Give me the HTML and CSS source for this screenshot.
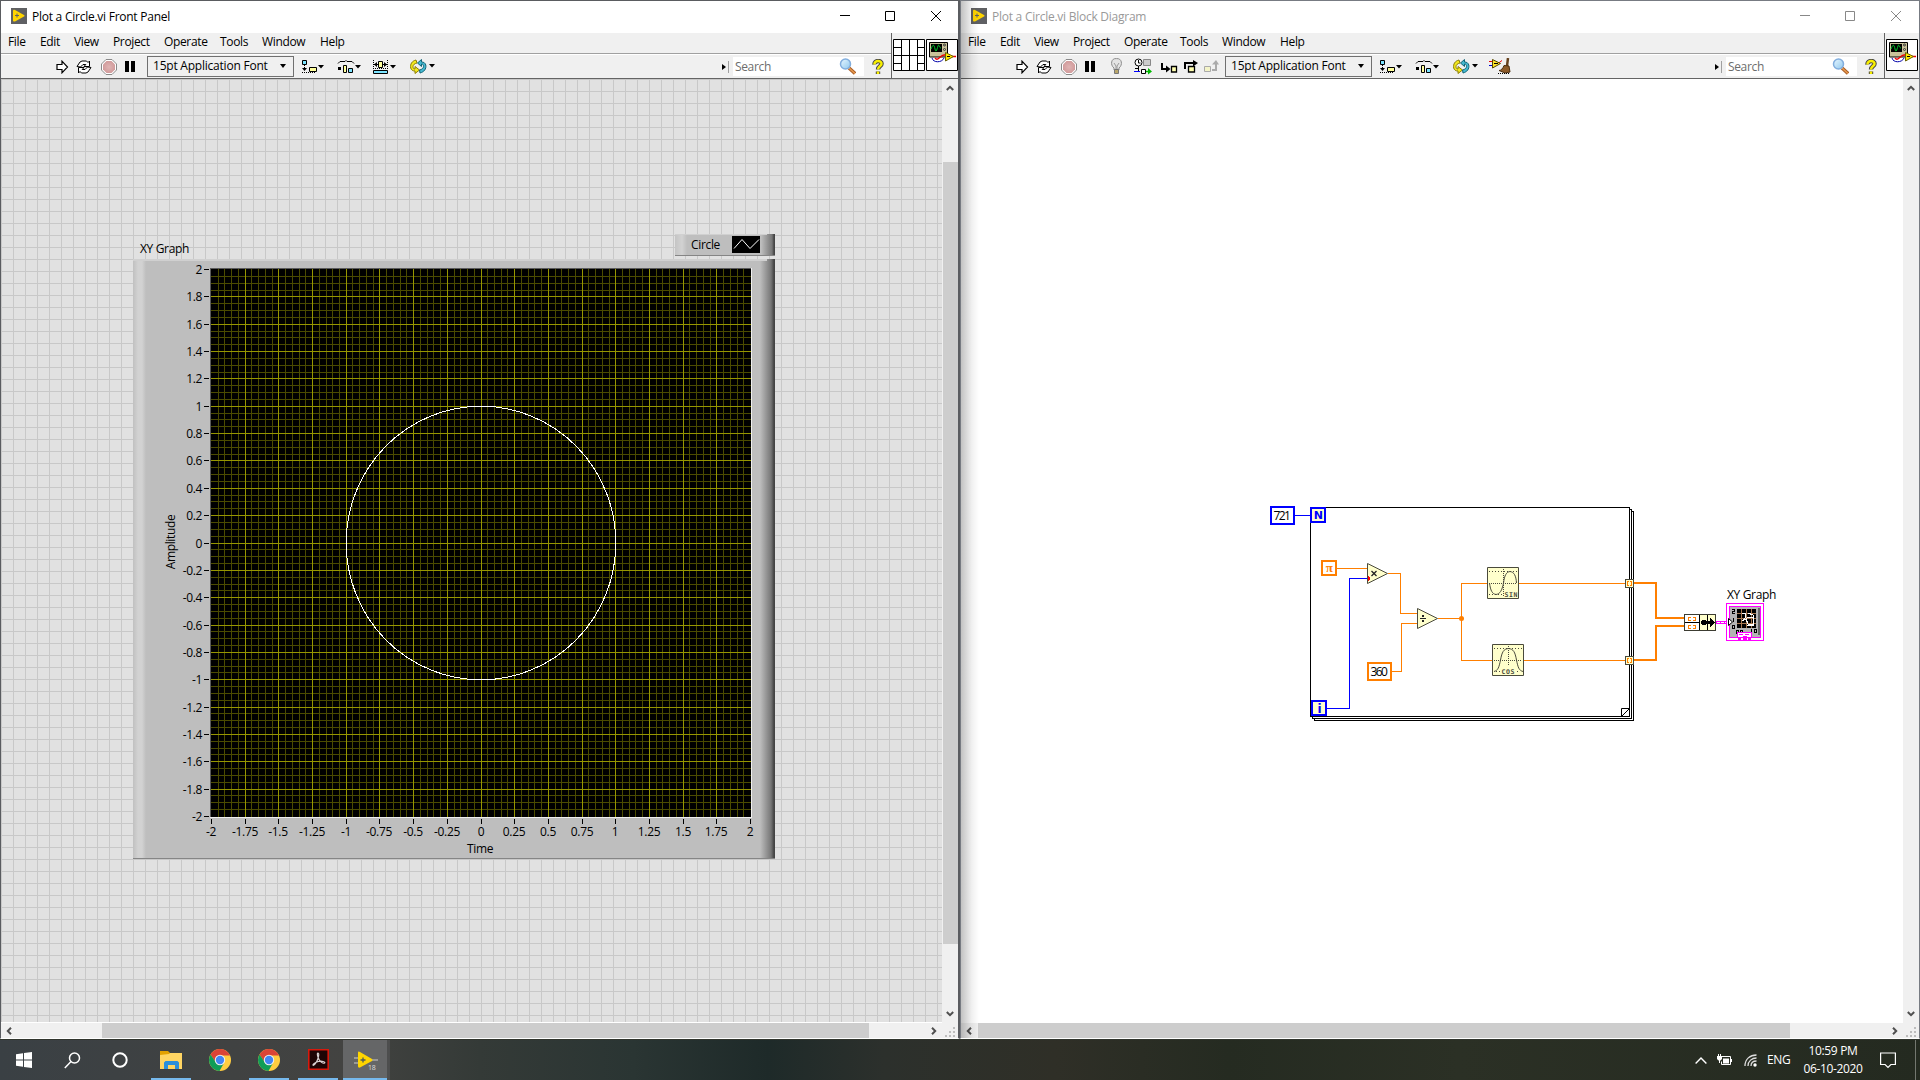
FILE: index.html
```html
<!DOCTYPE html>
<html lang="en">
<head>
<meta charset="utf-8">
<title>Plot a Circle.vi</title>
<link rel="stylesheet" href="styles.css">
</head>
<body>
<svg class="defs" aria-hidden="true">
  <defs>
    <radialGradient id="abortFill"><stop offset="0" stop-color="#e0b4b4"/><stop offset="1" stop-color="#d29c9c"/></radialGradient>
    <linearGradient id="lens" x1="0" y1="0" x2="1" y2="1"><stop offset="0" stop-color="#e8f7ff"/><stop offset="1" stop-color="#8fc8ee"/></linearGradient>
    <symbol id="app" viewBox="0 0 16 16"><path fill="#5f6063" d="M0 0h16v16H0z"/><path fill="#ffd500" d="M2 2.500c0-1 1-1 2-.6l9 5c.8.5.8 1 0 1.500l-9 5c-1 .4-2 .2-2-.8z"/><path stroke="#5f6063" d="M4 7.500h4M6 5.500v4"/></symbol>
    <symbol id="run" viewBox="0 0 13 14"><path fill="#fff" stroke="#000" stroke-width="1.200" d="M1 4.500h5V1.200L11.500 7 6 12.800V9.500H1z"/></symbol>
    <symbol id="loop" viewBox="0 0 16 14"><g fill="#fff" stroke="#000"><path d="M1 6.500L4 2l2-1h4.500l1.500 1.500L13.500 1v5.500H8L9.800 4.500H7L4.500 7z"/><path d="M15 7.500L12 12l-2 1H5.500L4 11.500 2.500 13V7.500H8L6.200 9.500H9L11.500 7z"/></g></symbol>
    <symbol id="abort" viewBox="0 0 16 16"><path fill="#fff" stroke="#8a8a8a" d="M5 .5h6L15.500 5v6L11 15.500H5L.5 11V5z"/><path fill="url(#abortFill)" d="M5.500 2h5L14 5.500v5L10.500 14h-5L2 10.500v-5z"/></symbol>
    <symbol id="pause" viewBox="0 0 10 11"><path d="M0 0h4v11H0zM6 0h4v11H6z"/></symbol>
    <symbol id="align" viewBox="0 0 24 14"><path fill="#7be4ff" stroke="#000" d="M1.500.5h4v4h-4z"/><path fill="#ffff9c" stroke="#000" d="M8.500 7.500h7v4h-7z"/><path stroke="#000" d="M3.500 5v5M1 12.500h14" stroke-dasharray="1 1"/><path d="M1 8h5L3.500 11zM17 5h6l-3 3.500z"/></symbol>
    <symbol id="dist" viewBox="0 0 24 14"><path fill="none" stroke="#000" d="M1 3.500l2-2h5l1-1 1 1h5l2 2"/><path d="M1 7h3v3H1zM18 5h6l-3 3.500z"/><path fill="#ffff9c" stroke="#000" d="M6.500 5.500h3v7h-3z"/><path fill="#7be4ff" stroke="#000" d="M11.500 8.500h4v4h-4z"/></symbol>
    <symbol id="resize" viewBox="0 0 24 14"><path stroke="#000" stroke-dasharray="1 1" d="M1.500 0v9M15.500 0v9M1 8.500h14"/><path stroke="#000" d="M2 4.500h13"/><path d="M2 4.500L5 2v5zM15 4.500L12 2v5zM18 5h6l-3 3.500z"/><path fill="#ffff9c" stroke="#000" d="M6.500 1.500h4v6h-4z"/><path fill="#7be4ff" stroke="#000" d="M1.500 10.500h14v3h-14z"/></symbol>
    <symbol id="reorder" viewBox="0 0 25 15"><path fill="#f2e81d" stroke="#8b7c05" d="M6 1C2 2 0 5 .7 9c.6 2 2 3 4.300 3v2.500L9.500 11 5 7.500V10c-1.500 0-2-1-2-2.500C3 6 4.500 4.500 7 4z"/><path fill="#45b8d0" stroke="#126577" d="M10 14c4-1 6.500-4 5.800-8-.6-2-2-3-4.300-3V.5L7.500 4l4 3.500V5c1.500 0 2 1 2 2.500 0 1.500-1.500 3-4 3.500z"/><path d="M19 5h6l-3 3.500z"/></symbol>
    <symbol id="bulb" viewBox="0 0 13 17"><path fill="#e4e4e4" stroke="#8c8c8c" d="M4 10C0 7 1-.1 6.500.6 12 0 13 7 9 10v2H4z"/><path fill="none" stroke="#999" d="M4 5l2 3v3M9 5L7 8v3"/><path fill="#b9a66a" stroke="#777" d="M4.500 11.500h4v4h-4z"/></symbol>
    <symbol id="retain" viewBox="0 0 18 17"><circle cx="4.500" cy="4.500" r="3.500" fill="#fff" stroke="#000"/><path fill="none" stroke="#000" d="M4.500 2v3h2M4.500 8v5M1 10.500h3"/><path fill="#ccc" stroke="#888" d="M9.500 1.500h7v6h-7z"/><path stroke="#00f" d="M0 13.500h6"/><path fill="#fff" stroke="#000" d="M7.500 11.500h4v4h-4z"/><path fill="#0b0" d="M12 12.800h2V10l4 3.500-4 3v-2.300h-2z"/></symbol>
    <symbol id="into" viewBox="0 0 17 12"><path fill="none" stroke="#000" stroke-width="2" d="M1 1v6h5"/><path d="M5 3.500L9.500 7 5 10.500z"/><path fill="#ffffb0" stroke="#000" stroke-width="1.300" d="M10.500 4.500h5v5.500h-5z"/></symbol>
    <symbol id="over" viewBox="0 0 15 13"><path fill="none" stroke="#000" stroke-width="2" d="M1 9V3h9"/><path d="M9 0l5 3-5 3.500z"/><path fill="#ffffb0" stroke="#000" stroke-width="1.300" d="M4.500 6.500h6v5.500h-6z"/></symbol>
    <symbol id="out" viewBox="0 0 15 13"><path fill="#f4f4c8" stroke="#aaa" d="M.5 6.500h6v5h-6z"/><path fill="none" stroke="#aaa" stroke-width="2" d="M8 10h4V4"/><path fill="#aaa" d="M8 4.500L12 0l3 4.500z"/></symbol>
    <symbol id="cleanup" viewBox="0 0 22 17"><path stroke="#00c" d="M0 7.500h4"/><path stroke="#e00" fill="none" d="M0 3.500h3M9 5.500l4-3"/><path fill="#ffe52b" stroke="#554700" d="M3.500 1.500l8 4-8 4.500z"/><path stroke="#000" d="M5 5.500h4"/><path stroke="#65401c" stroke-width="2.500" d="M19 0l-1 8"/><path fill="#8c5a28" stroke="#4a2d0e" d="M15 7.500l5 .5 1 6-5 1-6-2.500c2 0 4-2 5-5z"/><path stroke="#000" stroke-dasharray="1 1" d="M9 15.500h12"/></symbol>
    <symbol id="search" viewBox="0 0 17 17"><path stroke="#a85d27" stroke-width="3.500" d="M10 10l6 5.500"/><path stroke="#e99b4f" stroke-width="1.500" d="M10 10l6 5.500"/><circle cx="6.500" cy="6" r="5" fill="url(#lens)" stroke="#82aede" stroke-width="1.500"/></symbol>
    <symbol id="help" viewBox="0 0 12 16"><path fill="none" stroke="#444" stroke-width="4.400" d="M2.500 5.500C2 1 10 1 9.500 5c0 2-3.500 2-3.500 5.500M6 12.500v2.500"/><path fill="none" stroke="#f8ef00" stroke-width="2.500" d="M2.500 5.500C2 1 10 1 9.500 5c0 2-3.500 2-3.500 5.500M6 12.500v2.500"/></symbol>
    <symbol id="pane" viewBox="0 0 32 32"><path fill="#fff" stroke="#000" d="M.5 .5h31v31H.5zM8.500 0v32M16.500 0v32M24.500 0v32M0 16.500h32M0 8.500h8M0 24.500h8M24 8.500h8M24 24.500h8"/></symbol>
    <symbol id="vi" viewBox="0 0 32 32"><path fill="#fff" stroke="#000" d="M.5.5h31v31H.5z"/><path fill="#c8c29a" stroke="#000" d="M3.500 3.500h18v14.500h-18z"/><path d="M5 5h11v8H5z"/><path fill="none" stroke="#00cf2c" d="M5 10c2-5 3-5 4 0s2 0 3-3 2 3 3 2"/><circle cx="18.500" cy="6" r="1" fill="none" stroke="#333"/><circle cx="18.500" cy="10.500" r="1" fill="none" stroke="#333"/><path fill="none" stroke="#00a" d="M6 19c1 5 10 5 12 0"/><path fill="none" stroke="#e00" stroke-width="1.300" d="M9 19c3 4 5-3 9-3h1M26 17.500h4"/><path fill="#ffe800" stroke="#6b6100" d="M19.500 13.500l8 4-8 4.500z"/><path stroke="#000" d="M21 17.500h3"/></symbol>
    <symbol id="up" viewBox="0 0 8 6"><path fill="none" stroke="#505050" stroke-width="2" d="M.8 5L4 1.800 7.200 5"/></symbol>
    <symbol id="chrome" viewBox="0 0 22 22"><circle cx="11" cy="11" r="11" fill="#ffcd40"/><path fill="#db4437" d="M1.500 5.500A11 11 0 0 1 20.500 5.500L21 6.500H11L6.500 13z"/><path fill="#0f9d58" d="M1.500 5.500A11 11 0 0 0 10.500 22L15 14 11 15.500 7 13.500z"/><circle cx="11" cy="11" r="5.200" fill="#f1f1f1"/><circle cx="11" cy="11" r="4.200" fill="#4285f4"/></symbol>
    <symbol id="grip" viewBox="0 0 10 10"><path fill="#bdbdbd" d="M8 0h2v2H8zM4 4h2v2H4zM8 4h2v2H8zM0 8h2v2H0zM4 8h2v2H4zM8 8h2v2H8z"/></symbol>
  </defs>
</svg>

<div class="desktop">
  <main class="windows">
    <section class="window window-front">
      <header class="titlebar">
        <svg class="app-icon"><use href="#app"/></svg>
        <span class="title">Plot a Circle.vi Front Panel</span>
        <svg class="caption" viewBox="0 0 102 12"><path fill="none" stroke="#000" d="M0 5.500h10M45.500 1.500h9v9h-9zM91 1l10 10M101 1L91 11"/></svg>
      </header>
      <div class="bars">
        <div class="bars-main">
          <nav class="menu"><span class="m-file">File</span><span class="m-edit">Edit</span><span class="m-view">View</span><span class="m-project">Project</span><span class="m-operate">Operate</span><span class="m-tools">Tools</span><span class="m-window">Window</span><span>Help</span></nav>
          <div class="toolbar">
            <svg class="i-run"><use href="#run"/></svg>
            <svg class="i-loop"><use href="#loop"/></svg>
            <svg class="i-abort"><use href="#abort"/></svg>
            <svg class="i-pause"><use href="#pause"/></svg>
            <div class="font-box gap-front"><span>15pt Application Font</span><i></i></div>
            <svg class="i-drop"><use href="#align"/></svg>
            <svg class="i-drop next"><use href="#dist"/></svg>
            <svg class="i-drop third"><use href="#resize"/></svg>
            <svg class="i-reorder"><use href="#reorder"/></svg>
            <div class="search-wrap"><i class="tri"></i><i class="sep"></i><div class="search"><span>Search</span><svg class="i-search"><use href="#search"/></svg></div><svg class="i-help"><use href="#help"/></svg></div>
          </div>
        </div>
        <div class="connector"><svg><use href="#pane"/></svg><svg><use href="#vi"/></svg></div>
      </div>
      <div class="work">
        <div class="panel">
          <span class="graph-label">XY Graph</span>
          <div class="legend"><span>Circle</span><svg viewBox="0 0 28 17"><path d="M0 0h28v17H0z"/><path fill="none" stroke="#fff" d="M2 12.500l8-9 8 9 9-9"/></svg></div>
          <div class="graph"><svg id="plot" viewBox="133 259 642 600"></svg></div>
        </div>
        <div class="vscroll"><svg class="arrow"><use href="#up"/></svg><div class="thumb"></div><svg class="arrow down"><use href="#up"/></svg></div>
      </div>
      <div class="hscroll"><svg class="arrow left"><use href="#up"/></svg><div class="thumb"></div><svg class="arrow right"><use href="#up"/></svg><svg class="grip"><use href="#grip"/></svg></div>
    </section>

    <section class="window window-block">
      <header class="titlebar">
        <svg class="app-icon"><use href="#app"/></svg>
        <span class="title">Plot a Circle.vi Block Diagram</span>
        <svg class="caption" viewBox="0 0 102 12"><path fill="none" stroke="#888" d="M0 5.500h10M45.500 1.500h9v9h-9zM91 1l10 10M101 1L91 11"/></svg>
      </header>
      <div class="bars">
        <div class="bars-main">
          <nav class="menu"><span class="m-file">File</span><span class="m-edit">Edit</span><span class="m-view">View</span><span class="m-project">Project</span><span class="m-operate">Operate</span><span class="m-tools">Tools</span><span class="m-window">Window</span><span>Help</span></nav>
          <div class="toolbar">
            <svg class="i-run"><use href="#run"/></svg>
            <svg class="i-loop"><use href="#loop"/></svg>
            <svg class="i-abort"><use href="#abort"/></svg>
            <svg class="i-pause"><use href="#pause"/></svg>
            <svg class="i-bulb"><use href="#bulb"/></svg>
            <svg class="i-retain"><use href="#retain"/></svg>
            <svg class="i-into"><use href="#into"/></svg>
            <svg class="i-over"><use href="#over"/></svg>
            <svg class="i-out"><use href="#out"/></svg>
            <div class="font-box gap-block"><span>15pt Application Font</span><i></i></div>
            <svg class="i-drop"><use href="#align"/></svg>
            <svg class="i-drop next"><use href="#dist"/></svg>
            <svg class="i-reorder"><use href="#reorder"/></svg>
            <svg class="i-cleanup"><use href="#cleanup"/></svg>
            <div class="search-wrap"><i class="tri"></i><i class="sep"></i><div class="search"><span>Search</span><svg class="i-search"><use href="#search"/></svg></div><svg class="i-help"><use href="#help"/></svg></div>
          </div>
        </div>
        <div class="connector"><svg><use href="#vi"/></svg></div>
      </div>
      <div class="work">
        <svg class="diagram" viewBox="961 79 942 944" shape-rendering="crispEdges">
          <g fill="#fff" stroke="#000">
            <path d="M1314.500 511.500h319v209h-319z"/>
            <path d="M1312.500 509.500h319v209h-319z"/>
            <path d="M1310.500 507.500h319v209h-319z"/>
            <path d="M1621.500 716v-7.500h8M1621.500 716.500l8-8" shape-rendering="auto"/>
          </g>
          <g fill="none" stroke="#00f"><path d="M1295 515.500h15M1327 708.500h22.500v-130h18"/></g>
          <g fill="none" stroke="#ff7f00">
            <path d="M1337 568.500h31M1388 573.500h12.500v40h17M1392 671.500h9.500v-48h16M1438 618.500h23.500M1487 583.500h-25.500v77h31M1519 583.500h107M1524 660.500h102"/>
            <path stroke-width="2" d="M1634 583h22v35h28M1634 660h22v-34h28"/>
          </g>
          <circle cx="1461.500" cy="618.500" r="2.500" fill="#ff7f00" shape-rendering="auto"/>
          <g fill="#fff" stroke-width="2">
            <path stroke="#00f" d="M1271 507h23v17h-23z"/>
            <path stroke="#ff7f00" d="M1322 561h14v14h-14zM1368 663h23v17h-23z"/>
            <path fill="#ffffcc" stroke="#00f" d="M1311 508h14v14h-14zM1312 701h14v14h-14z"/>
          </g>
          <text x="1273.500" y="520" textLength="17">721</text>
          <text x="1370.500" y="676" textLength="17">360</text>
          <text class="t-blue" x="1318.300" y="519">N</text>
          <text class="t-index" x="1319.300" y="712.500">i</text>
          <text class="t-pi" x="1329.200" y="572">π</text>
          <g fill="#ffffcc" stroke="#4a4a3c" shape-rendering="auto">
            <path d="M1367.500 563.500v20l20-10z"/><path d="M1417.500 608.500v20l20-10z"/>
            <path d="M1487.500 567.500h31v31h-31zM1492.500 644.500h31v31h-31z"/>
          </g>
          <path stroke="#222" stroke-width="1.300" shape-rendering="auto" d="M1371.500 571l5 5M1376.500 571l-5 5"/>
          <path fill="#222" d="M1420 618h6v1h-6zM1422 615h2v2h-2zM1422 620h2v2h-2z"/>
          <path fill="#f00" d="M1368 576h1l1 2v1l-1 2h-1z"/>
          <g fill="none" stroke="#4a4a3c">
            <path stroke-dasharray="1 1" d="M1489 583.500h28M1503.500 569v28M1494 660.500h28M1508.500 646v20"/>
            <path stroke-dasharray="1 2" d="M1489 571.500h28M1489 594.500h14M1494 648.500h28M1496 671.500h24"/>
            <path shape-rendering="auto" d="M1489.500 583c1 8 3 11 6.500 11.500 4-.5 6-4 7.500-11.500 1-8 3-11 6.500-11.500 4 .5 6 4 6.500 11.500M1494 671.500c4-1 5-4 6.500-11.500 1.500-8 3-11 8-11.500 5 .5 6.500 3.500 8 11.500 1.500 7.500 2.500 10.500 6.500 11.500"/>
          </g>
          <path fill="#ffffcc" d="M1504 591h14v7h-14zM1501 668h14v6h-14z"/>
          <text class="t-small" x="1504.500" y="597" textLength="13">SIN</text>
          <text class="t-small" x="1501.500" y="674" textLength="13">COS</text>
          <path fill="#ffffcc" stroke="#4a4a3c" d="M1625.500 579.500h8v8h-8zM1625.500 656.500h8v8h-8z"/>
          <path fill="none" stroke="#ff7f00" d="M1629 581.500h-1.500v4h1.500M1630 581.500h1.500v4h-1.500M1629 658.500h-1.500v4h1.500M1630 658.500h1.500v4h-1.500"/>
          <path fill="#ffffcc" stroke="#3c3c32" d="M1684.500 614.500h31v16h-31z"/>
          <path fill="#fff" d="M1685 615h14v15h-14z"/>
          <path stroke="#000" d="M1685 622.500h14M1699.500 615v15M1707.500 615v15"/>
          <path d="M1702 620h4v1h4v-3l5 4.500-5 4.500v-3h-4v1h-4l-1-1v-3z"/>
          <path fill="none" stroke="#ff7f00" d="M1691 617.500h-2.500v3h2.500M1693 617.500h2.500v3h-2.500M1691 625.500h-2.500v3h2.500M1693 625.500h2.500v3h-2.500"/>
          <path fill="#f0f" d="M1716 621h10v3h-10z"/><path stroke="#fff" stroke-dasharray="3 1" d="M1717 622.500h9"/>
          <text x="1727" y="599" textLength="49" lengthAdjust="spacingAndGlyphs">XY Graph</text>
          <path fill="#fff" stroke="#f0f" d="M1726.500 603.500h37v37h-37z"/>
          <path fill="#b4b4b4" stroke="#f0f" d="M1729.500 606.500h31v31h-31z"/>
          <path fill="#666" d="M1758 608h2v27h-2z"/>
          <path d="M1737 609h19v19h-19z"/>
          <path fill="none" stroke="#a87850" d="M1741.500 609v19M1746.500 609v19M1751.500 609v19M1737 613.500h19M1737 618.500h19M1737 623.500h19"/>
          <path fill="none" stroke="#fff" d="M1742 613h3v5l-3 3 4-2 2 5h5v-7h-5l-3 3M1748 613l5 2v10h-6"/>
          <path fill="none" stroke="#000" d="M1732 609.500h2.500v2h-2v2h2.500M1733.500 618v4M1732.500 625.500h2v3h-2zM1736.500 630.500h2v3h-2zM1740.500 630.500h2v3h-2zM1751.500 629v5M1754.500 629.500h2v3h-2z"/>
          <path fill="#fff" stroke="#000" shape-rendering="auto" d="M1728.500 618.500v7l4-3.500z"/>
          <path fill="#fff" stroke="#f0f" d="M1737.500 632.500h14v5h-14z"/><path fill="#f0f" d="M1739 634h4v1h-4zM1745 634h4v1h-4zM1738 638h3v3h-3zM1743 636h4v4h-4zM1748 638h3v3h-3z"/>
        </svg>
        <div class="vscroll"><svg class="arrow"><use href="#up"/></svg><svg class="arrow down"><use href="#up"/></svg></div>
      </div>
      <div class="hscroll"><svg class="arrow left"><use href="#up"/></svg><div class="thumb"></div><svg class="arrow right"><use href="#up"/></svg><svg class="grip"><use href="#grip"/></svg></div>
    </section>
  </main>

  <footer class="taskbar">
    <div class="task"><svg width="16" height="16" viewBox="0 0 16 16"><path fill="#fff" d="M0 2.300l7-1v6.200H0zM8 1.100L16 0v7.500H8zM0 8.500h7v6.200l-7-1zM8 8.500h8V16l-8-1.100z"/></svg></div>
    <div class="task"><svg width="17" height="17" viewBox="0 0 17 17"><g fill="none" stroke="#fff" stroke-width="1.500"><circle cx="10.500" cy="6" r="5"/><path d="M7 9.500L.8 16"/></g></svg></div>
    <div class="task"><svg width="16" height="16" viewBox="0 0 16 16"><circle cx="8" cy="8" r="6.700" fill="none" stroke="#fff" stroke-width="2"/></svg></div>
    <div class="task gap open"><svg width="22" height="19" viewBox="0 0 22 19"><path fill="#e3a100" d="M0 0h8l2 2v3H0z"/><path fill="#ffd563" d="M0 4l9-1 1-1h12v16H0z"/><path fill="#2b8fdb" d="M4 18v-6.500L5.500 10h12l1.500 1.500V18h-4v-4H8v4z"/></svg></div>
    <div class="task gap"><svg width="22" height="22"><use href="#chrome"/></svg></div>
    <div class="task gap open"><svg width="22" height="22"><use href="#chrome"/></svg></div>
    <div class="task gap open"><svg class="raise" width="21" height="21" viewBox="0 0 21 21"><path fill="#1e0505" stroke="#d8190c" stroke-width="1.600" d="M.8.8h19.400v19.400H.8z"/><path fill="none" stroke="#d8d0d0" stroke-width="1.200" d="M10 4c-1.500 0 0 4.500 1 6.500s4 4.500 5.500 3.500-3-2.500-6-1.500-6 2-5.500 3.500S9 13 10 9.500 11 4 10 4z"/></svg></div>
    <div class="task active"><svg width="26" height="21" viewBox="0 0 26 21"><path stroke="#aaa" stroke-width="1.500" d="M2 8h6M2 13h6M19 10h7"/><path fill="#ffd500" d="M6 2.500Q6 1 8 2l12 7q1 1 0 2L8 17.500Q6 18 6 16.500z"/><path stroke="#4d5a5a" stroke-width="1.300" d="M8.500 10h5M11 7.500v5"/><text class="badge" x="16" y="20">18</text></svg></div>
    <div class="tray">
      <svg class="tray-up" viewBox="0 0 12 7"><path fill="none" stroke="#fff" stroke-width="1.400" d="M.6 6.400L6 1l5.400 5.400"/></svg>
      <svg class="tray-battery" viewBox="0 0 16 12"><path fill="none" stroke="#fff" d="M5 2.500h8.500v8H4.500v-3M14.500 5v3"/><path fill="#fff" d="M6 4.500h6v5H6zM0 2h5v3L3.500 6.500h-2L0 5zM1 0h1v2H1zM3 0h1v2H3zM2 6h1v3H2z"/></svg>
      <svg class="tray-wifi" viewBox="0 0 14 13"><g fill="none" stroke="#ddd" stroke-width="1.300"><path d="M1 12C1 5 6 1 12.500 1M4 12c0-5 4-8 8.500-8M7 12c0-3 2-5 5.500-5"/></g><circle cx="11" cy="11" r="1.700" fill="#fff"/></svg>
      <span class="lang">ENG</span>
      <div class="clock"><span>10:59 PM</span><span>06-10-2020</span></div>
      <svg class="tray-note" viewBox="0 0 16 17"><path fill="none" stroke="#fff" stroke-width="1.200" d="M.6 1h14.800v11.500h-4.500L8 15.400l-2.900-2.900H.6z"/></svg>
      <i class="peek"></i>
    </div>
  </footer>
</div>
<script src="plot.js"></script>
</body>
</html>
```
FILE: plot.js
```javascript
const plot = document.getElementById("plot");
const NS = "http://www.w3.org/2000/svg";
const left = 211, top_ = 269, stepX = 33.69, stepY = 27.35;
const px = (i) => Math.round(left + i * stepX);
const py = (i) => Math.round(top_ + i * stepY);

function add(tag, attrs, text) {
  const el = document.createElementNS(NS, tag);
  for (const key in attrs) el.setAttribute(key, attrs[key]);
  if (text) el.textContent = text;
  plot.appendChild(el);
}

add("rect", { x: 210, y: 268, width: 542, height: 550, fill: "#f0f0f0" });
add("rect", { x: 210, y: 268, width: 541, height: 549, fill: "#5a5a5a" });
add("rect", { x: 211, y: 269, width: 540, height: 548, fill: "#000" });

// minor divisions: five per major step on X, four on Y
let minor = "", major = "", ticks = "";
for (let i = 1; i < 80; i++) if (i % 5) minor += `M${px(i / 5) + 0.5} 269V817`;
for (let i = 1; i < 80; i++) if (i % 4) minor += `M211 ${py(i / 4) + 0.5}H751`;
for (let i = 1; i < 16; i++) major += `M${px(i) + 0.5} 269V817`;
for (let i = 1; i < 20; i++) major += `M211 ${py(i) + 0.5}H751`;
for (let i = 0; i <= 16; i++) ticks += `M${px(i) + 0.5} 819v5`;
for (let i = 0; i <= 20; i++) ticks += `M204 ${py(i) + 0.5}h5`;
const crisp = { fill: "none", "shape-rendering": "crispEdges" };
add("path", { ...crisp, d: minor, stroke: "#4b4b00" });
add("path", { ...crisp, d: major, stroke: "#969600" });
add("path", { ...crisp, d: ticks, stroke: "#000" });
add("ellipse", { ...crisp, cx: 481, cy: 543, rx: 134.8, ry: 136.8, stroke: "#fff" });

for (let i = 0; i <= 20; i++) {
  const value = String(+(2 - i * 0.2).toFixed(1));
  add("text", { x: 202, y: py(i) + 5, class: "axis-y" }, value === "-0" ? "0" : value);
}
for (let i = 0; i <= 16; i++) {
  add("text", { x: px(i), y: 836, class: "axis-x" }, String(-2 + i * 0.25));
}
add("text", { x: 480, y: 853, class: "axis-x" }, "Time");
add("text", { x: 0, y: 0, class: "axis-x", transform: "translate(175 542) rotate(-90)" }, "Amplitude");
```
FILE: styles.css
```css
* { box-sizing: border-box; }
body { margin: 0; overflow: hidden; font: 12px/16px "Open Sans", "Noto Sans", sans-serif; letter-spacing: -0.35px; color: #000; }
svg { display: block; flex: none; }
text { font: 12px "Open Sans", "Noto Sans", sans-serif; letter-spacing: -0.35px; }
.defs { position: absolute; width: 0; height: 0; }
.desktop { width: 1920px; height: 1080px; display: flex; flex-direction: column; background: #30352d; }
.windows { height: 1040px; display: grid; grid-template-columns: 960px 960px; }

.window { height: 1039px; display: flex; flex-direction: column; border: 1px solid #5a5c60; border-bottom: 1px solid #fff; background: #fff; }
.window-front { border-right-width: 2px; width: 960px; }
.window-block { position: relative; border-color: #777b82; border-bottom-color: #fff; }
.window-block::before { content: ""; position: absolute; z-index: 1; left: 0; top: 0; bottom: 0; width: 18px; background: linear-gradient(90deg, rgba(0,0,0,.24), rgba(0,0,0,.06) 60%, transparent); }
.titlebar { height: 32px; display: flex; align-items: center; padding: 0 16px 0 10px; background: #fff; flex: none; }
.window-block .titlebar { padding-right: 17px; }
.app-icon { width: 16px; height: 16px; margin-right: 5px; margin-top: -2px; }
.title { flex: 1; letter-spacing: -0.25px; }
.window-block .title { color: #999; }
.caption { width: 102px; height: 12px; margin-top: -2px; }

.bars { height: 46px; display: flex; flex: none; background: #f0f0f0; border-bottom: 1px solid #646464; }
.bars-main { flex: 1; }
.menu { height: 21px; display: flex; padding: 1px 0 0 7px; border-bottom: 1px solid #a0a0a0; }
.m-file { width: 32px; } .m-edit { width: 34px; } .m-view { width: 39px; } .m-project { width: 51px; }
.m-operate { width: 56px; } .m-tools { width: 42px; } .m-window { width: 58px; }
.toolbar { height: 24px; display: flex; align-items: center; padding-left: 55px; border-top: 1px solid #fff; }
.connector { display: flex; gap: 1px; align-items: flex-start; padding: 6px 0 0 1px; border-left: 1px solid #646464; }
.window-front .connector { width: 67px; }
.window-block .connector { width: 35px; }
.connector svg { width: 32px; height: 32px; }
.i-run { width: 13px; height: 14px; }
.i-loop { width: 16px; height: 14px; margin-left: 7px; }
.i-abort { width: 16px; height: 16px; margin-left: 9px; }
.i-pause { width: 10px; height: 11px; margin-left: 8px; }
.i-bulb { width: 13px; height: 17px; margin-left: 15px; }
.i-retain { width: 18px; height: 17px; margin-left: 11px; }
.i-into { width: 17px; height: 12px; margin-left: 9px; margin-top: 3px; }
.i-over { width: 15px; height: 13px; margin-left: 6px; }
.i-out { width: 15px; height: 13px; margin-left: 5px; }
.font-box { width: 147px; height: 21px; display: flex; align-items: center; justify-content: space-between; padding: 0 7px 1px 5px; border: 1px solid #707070; background: #f0f0f0; letter-spacing: -0.22px; }
.font-box i { border: 3.500px solid transparent; border-top: 4px solid #000; border-bottom: 0; }
.gap-front { margin-left: 12px; }
.gap-block { margin-left: 6px; }
.i-drop { width: 24px; height: 14px; margin-left: 7px; }
.i-drop.next { margin-left: 12px; }
.i-drop.third { margin-left: 11px; }
.i-reorder { width: 25px; height: 15px; margin-left: 14px; }
.i-cleanup { width: 22px; height: 17px; margin-left: 11px; }
.search-wrap { margin-left: auto; display: flex; align-items: center; padding-right: 7px; }
.tri { border: 3px solid transparent; border-left: 4px solid #000; border-right: 0; }
.sep { width: 1px; height: 12px; margin: 0 4px 0 2px; background: #a0a0a0; }
.search { width: 131px; height: 19px; display: flex; align-items: center; justify-content: space-between; padding: 0 8px 0 2px; background: #fff; color: #6d6d6d; }
.i-search { width: 17px; height: 17px; }
.i-help { width: 12px; height: 16px; margin-left: 8px; }

.work { flex: 1; display: flex; min-height: 0; }
.panel { position: relative; width: 941px; background-color: #e1e1e1; background-image: linear-gradient(90deg, #c8c8c8 1px, transparent 1px), linear-gradient(#c8c8c8 1px, transparent 1px); background-size: 12px 12px; border-bottom: 1px solid #fff; }
.graph-label { position: absolute; left: 139px; top: 162px; }
.legend { position: absolute; left: 674px; top: 155px; width: 100px; height: 22px; display: flex; align-items: center; justify-content: flex-end; gap: 12px; padding-right: 15px; border-bottom: 1px solid #858585; background: linear-gradient(#d0d0d0, #d0d0d0) 0 0 / 92px 1px no-repeat, linear-gradient(90deg, #c4c4c4, #d2d2d2 7px, #bebebe 12px, #bebebe 86px, #777 97px, #444 99px); }
.legend svg { width: 28px; height: 17px; }
.graph { position: absolute; left: 132px; top: 180px; width: 642px; height: 600px; border-bottom: 1px solid #858585; background: linear-gradient(#d0d0d0, #d0d0d0) 0 0 / 634px 2px no-repeat, linear-gradient(90deg, #c0c0c0, #d2d2d2 5px, #d2d2d2 9px, #bebebe 13px, #bebebe 627px, #777 638px, #444 641px); }
.graph svg { width: 642px; height: 600px; }
.axis-y { text-anchor: end; }
.axis-x { text-anchor: middle; }
.diagram { width: 942px; height: 944px; }
.t-blue { font: bold 11px "DejaVu Sans", sans-serif; fill: #00f; text-anchor: middle; }
.t-index { font: bold 12px "DejaVu Sans", sans-serif; fill: #00f; text-anchor: middle; }
.t-pi { font: bold 13px "Liberation Serif", serif; fill: #ff7f00; text-anchor: middle; }
.t-small { font: bold 6.500px "DejaVu Sans Mono", monospace; fill: #4a4a3c; letter-spacing: 0; }

.vscroll { width: 16px; display: flex; flex-direction: column; justify-content: space-between; align-items: center; padding: 6px 0; background: #f0f0f0; }
.vscroll .thumb { width: 15px; height: 782px; margin-top: -5px; margin-bottom: -8px; background: #cdcdcd; }
.arrow { width: 8px; height: 6px; }
.down { transform: rotate(180deg); }
.left { transform: rotate(-90deg); }
.right { transform: rotate(90deg); }
.hscroll { height: 15px; display: flex; align-items: center; background: #f0f0f0; padding: 0 3px 0 4px; flex: none; }
.hscroll .thumb { height: 15px; margin-left: 89px; margin-right: 61px; width: 767px; background: #cdcdcd; }
.window-block .hscroll .thumb { width: 812px; margin-left: 5px; margin-right: 101px; }
.grip { width: 10px; height: 10px; margin-left: auto; margin-top: 3px; }

.taskbar { height: 40px; display: flex; color: #fff; background: linear-gradient(90deg, #3a4044, #434341 18%, #343a37 25%, #2a3533 33%, #1e2a29 40%, #2c302c 46%, #2f2f27 55%, #252b21 64%, #2b3025 76%, #242a20 100%); }
.task { width: 40px; display: flex; align-items: center; justify-content: center; margin-right: 8px; border-bottom: 2px solid transparent; border-top: 2px solid transparent; }
.task:first-child { margin-left: 4px; }
.task.gap { margin-right: 9px; }
.task:nth-child(3) { margin-right: 11px; }
.task.open { border-bottom-color: #76b9ed; }
.task:nth-child(7) { margin-right: 5px; }
.task.active { width: 44px; background: #656667; border-bottom-color: #76b9ed; box-shadow: 3px 0 #4d4e4e; border-top-color: #656667; }
.raise { margin-top: -2px; }
.badge { font: 7px "Open Sans", sans-serif; fill: #ddd; }
.tray { margin-left: auto; display: flex; align-items: center; }
.tray-up { width: 12px; height: 7px; margin-right: 10px; }
.tray-battery { width: 16px; height: 12px; margin-right: 11px; }
.tray-wifi { width: 14px; height: 13px; margin-right: 9px; }
.lang { width: 24px; margin-right: 12px; }
.clock { width: 60px; display: flex; flex-direction: column; align-items: center; line-height: 18px; margin-right: 17px; }
.tray-note { width: 16px; height: 17px; margin-right: 19px; }
.peek { width: 1px; height: 40px; background: #73776f; margin-right: 4px; }
```
